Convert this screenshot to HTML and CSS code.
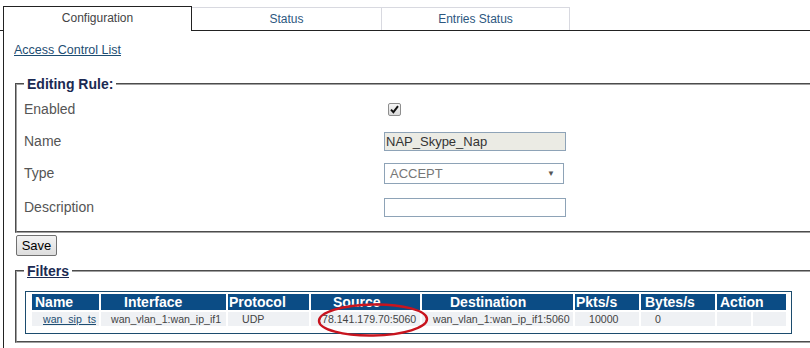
FILE: index.html
```html
<!DOCTYPE html>
<html>
<head>
    <title>Access Control List</title>
    <link rel="stylesheet" href="styles.css">
</head>
<body>

    <!-- Tab strip -->
    <div class="tabs">
        <div class="tab active">Configuration</div>
        <div class="tab status">Status</div>
        <div class="tab">Entries Status</div>
    </div>

    <div class="panel">
        <a class="acl" href="#">Access Control List</a>

        <!-- Rule form -->
        <fieldset class="box rule">
            <legend>Editing Rule:</legend>
            <div class="row">
                <label>Enabled</label>
                <span class="check">
                    <svg width="9" height="9" viewBox="0 0 9 9"><path d="M1 4.6 L3.4 7.2 L8 1.2" fill="none" stroke="#111" stroke-width="1.9"/></svg>
                </span>
            </div>
            <div class="row">
                <label>Name</label>
                <input class="field readonly" type="text" value="NAP_Skype_Nap" readonly>
            </div>
            <div class="row">
                <label>Type</label>
                <div class="select"><span>ACCEPT</span><span class="arrow">&#9660;</span></div>
            </div>
            <div class="row tall">
                <label>Description</label>
                <input class="field" type="text">
            </div>
        </fieldset>

        <button class="save">Save</button>

        <!-- Filters table -->
        <fieldset class="box filters">
            <legend>Filters</legend>
            <div class="grid-wrap">
                <table>
                    <colgroup>
                        <col style="width:67px"><col style="width:125px"><col style="width:81px">
                        <col style="width:109px"><col style="width:151px"><col style="width:64px">
                        <col style="width:74px"><col style="width:34px"><col style="width:33px">
                    </colgroup>
                    <tr>
                        <th>Name</th>
                        <th>Interface</th>
                        <th>Protocol</th>
                        <th>Source</th>
                        <th>Destination</th>
                        <th>Pkts/s</th>
                        <th>Bytes/s</th>
                        <th colspan="2">Action</th>
                    </tr>
                    <tr>
                        <td><a href="#">wan_sip_ts</a></td>
                        <td>wan_vlan_1:wan_ip_if1</td>
                        <td>UDP</td>
                        <td>78.141.179.70:5060</td>
                        <td>wan_vlan_1:wan_ip_if1:5060</td>
                        <td>10000</td>
                        <td>0</td>
                        <td></td>
                        <td></td>
                    </tr>
                </table>
            </div>
        </fieldset>
    </div>

    <!-- hand drawn highlight -->
    <svg class="mark" width="130" height="44" viewBox="0 0 130 44">
        <ellipse cx="63" cy="21" rx="54" ry="15.5" fill="none" stroke="#c8141e" stroke-width="2.4" transform="rotate(-1 63 21)"/>
    </svg>

</body>
</html>
```

FILE: styles.css
```css
html, body { margin: 0; padding: 0; overflow: hidden; }
body { font-family: "Liberation Sans", Arial, sans-serif; background: #fff; width: 810px; height: 348px; position: relative; }

.tabs { display: flex; align-items: flex-end; height: 24px; padding: 6px 0 0 3px; border-bottom: 1px solid #222; }
.tab { width: 187px; height: 22px; border-top: 1px solid #d8d9e0; border-right: 1px solid #d8d9e0; line-height: 22px; text-align: center; font-size: 12px; color: #2d5880; background: #fff; }
.tab.status { width: 189px; }
.tab.active { height: 24px; margin-bottom: -1px; border: 1px solid #222; border-bottom: none; line-height: 23px; color: #444; }

.panel { margin-left: 3px; border-left: 1px solid #222; height: 305px; padding: 12px 0 0 10px; }
.acl { display: block; font-size: 12.5px; line-height: 14px; color: #1d4d72; }

.box { width: 780px; border: 2px groove #a0a0a0; padding: 1px 7px 6px 7px; margin: 0 0 0 1px; box-sizing: content-box; }
.box legend { padding: 0 3px; font-size: 14px; line-height: 16px; font-weight: bold; color: #1b2a52; }
.rule { margin-top: 19px; }

.row { display: flex; align-items: center; height: 32px; }
.row.tall { height: 36px; }
.row label { width: 360px; font-size: 14px; color: #555; }

.check { display: flex; align-items: center; justify-content: center; width: 11px; height: 11px; margin-left: 4px; border: 1px solid #8e8e8e; border-radius: 2px; background: linear-gradient(#f6f6f6, #dadada); }

.field { width: 178px; height: 17px; margin: 0; padding: 0 1px; border: 1px solid #8ea3b7; font-family: "Liberation Sans", Arial, sans-serif; font-size: 13px; color: #333; box-sizing: content-box; }
.field.readonly { background: #ebebe4; }
.select { display: flex; align-items: center; justify-content: space-between; width: 165px; height: 19px; padding: 0 8px 0 5px; border: 1px solid #8ea3b7; font-size: 13px; color: #777; box-sizing: content-box; }
.select .arrow { font-size: 8px; color: #555; }

.save { display: block; width: 41px; height: 21px; margin: 2px 0 0 2px; padding: 0; border: 1px solid #707070; border-radius: 2px; background: linear-gradient(#f3f3f3, #dddddd); font-family: "Liberation Sans", Arial, sans-serif; font-size: 13px; color: #000; }

.filters { margin-top: 7px; padding-bottom: 7px; }
.filters legend { text-decoration: underline; }
.grid-wrap { width: fit-content; margin: 11px 0 0 1px; padding: 0 3px 5px 4px; border: 1px solid #1c4c6e; }

table { border-collapse: separate; border-spacing: 2px; table-layout: fixed; width: 758px; }
th { padding: 0; height: 16px; line-height: 16px; background: #0b4c85; color: #fff; font-size: 14px; font-weight: bold; text-align: left; white-space: nowrap; }
td { padding: 0 0 0 11px; height: 14px; line-height: 14px; background: #eff1f4; color: #444; font-size: 10.6px; white-space: nowrap; }
td a { color: #1d4d72; }

th:nth-child(1) { padding-left: 3px; }
th:nth-child(2) { padding-left: 23px; }
th:nth-child(3) { padding-left: 1px; }
th:nth-child(4) { padding-left: 22px; }
th:nth-child(5) { padding-left: 28px; }
th:nth-child(6) { padding-left: 1px; }
th:nth-child(7) { padding-left: 4px; }
th:nth-child(8) { padding-left: 3px; }
td:nth-child(2) { padding-left: 10px; }
td:nth-child(3), td:nth-child(6), td:nth-child(7) { padding-left: 14px; }

.mark { position: absolute; left: 310px; top: 299px; }
```
